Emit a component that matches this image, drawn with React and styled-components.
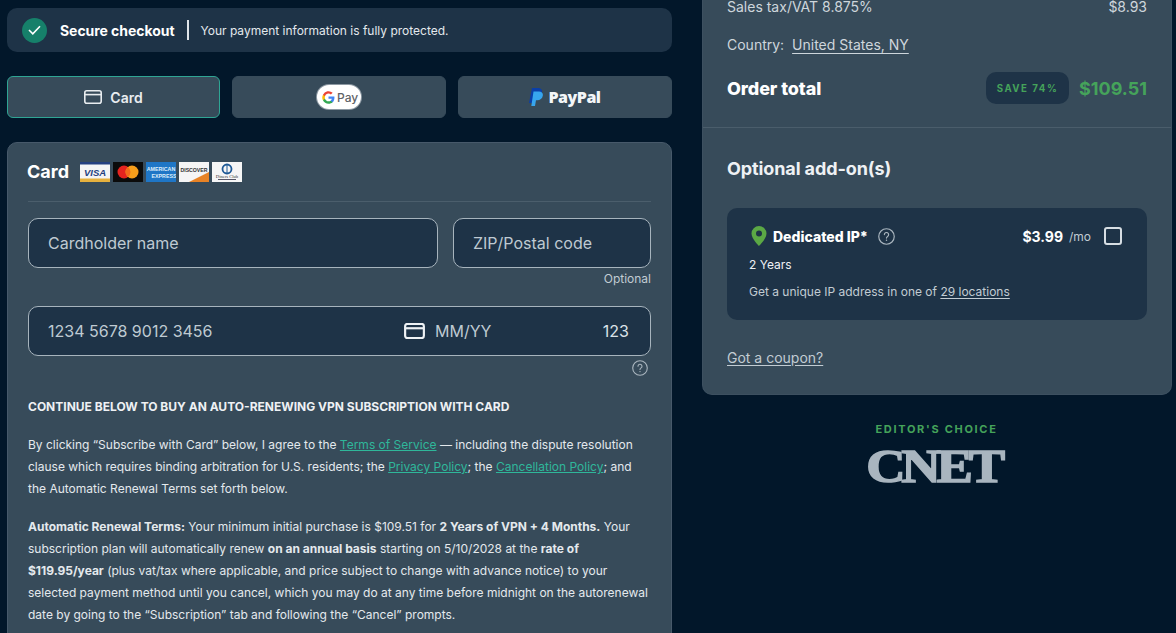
import React from "react";
import styled, { createGlobalStyle } from "styled-components";

const Global = createGlobalStyle`
  html, body { margin: 0; padding: 0; height: 633px; overflow: hidden; background: #02172a; }
  * { box-sizing: border-box; }
  body { font-family: Inter, "Liberation Sans", sans-serif; color: #fff; }
`;

const Page = styled.div`
  display: grid;
  grid-template-columns: 665px 470px;
  column-gap: 30px;
  padding-left: 7px;
  height: 633px;
  overflow: hidden;
  background: #02172a;
`;
const Left = styled.main`
  display: flex;
  flex-direction: column;
  padding-top: 8px;
`;
const Banner = styled.div`
  height: 44px;
  flex: none;
  border-radius: 10px;
  background: #1e3347;
  display: flex;
  align-items: center;
  padding-left: 15px;
`;
const Check = styled.span`
  width: 25px;
  height: 25px;
  border-radius: 50%;
  background: #16806a;
  display: flex;
  align-items: center;
  justify-content: center;
  margin-right: 13px;
`;
const BannerTitle = styled.strong`
  font-size: 14px;
  font-weight: 700;
  letter-spacing: -0.05px;
`;
const Bar = styled.span`
  width: 2px;
  height: 20px;
  background: #dfe5ea;
  margin: 0 12px;
`;
const BannerText = styled.span`
  font-size: 12px;
  color: #e4e9ed;
`;
const Tabs = styled.div`
  display: grid;
  grid-template-columns: 213px 214px 214px;
  column-gap: 12px;
  margin-top: 24px;
  flex: none;
`;
const Tab = styled.div`
  height: 42px;
  border-radius: 6px;
  background: #374b5a;
  border: 1px solid ${(p) => (p.$active ? "#2fa594" : "#374b5a")};
  display: flex;
  align-items: center;
  justify-content: center;
  gap: 8px;
  font-size: 14px;
  font-weight: 600;
  color: #e9edf0;
`;
const GPay = styled.span`
  display: flex;
  align-items: center;
  gap: 2px;
  width: 44px;
  height: 24px;
  border-radius: 12px;
  background: #fff;
  box-shadow: 0 0 0 1px #8d99a3;
  color: #5f6368;
  font-size: 12px;
  font-weight: 500;
  padding-left: 5px;
`;
const PayPalWord = styled.span`
  font-family: "Open Sans", sans-serif;
  font-size: 16px;
  font-weight: 800;
  color: #f3f6f8;
  letter-spacing: -0.5px;
`;
const PayPalLogo = styled.span`
  display: flex;
  align-items: center;
  gap: 5px;
`;
const Card = styled.section`
  margin-top: 24px;
  flex: none;
  background: #374b5a;
  border: 1px solid #47596a;
  border-radius: 10px;
  padding: 15px 20px 40px;
`;
const CardHead = styled.div`
  display: flex;
  align-items: center;
  height: 28px;
  padding-bottom: 1px;
  margin-bottom: 15px;
`;
const CardTitle = styled.h2`
  margin: 0 10px 0 -1px;
  font-size: 18px;
  font-weight: 700;
`;
const Logos = styled.div`
  display: flex;
  gap: 3px;
  margin-left: 1px;
`;
const Divider = styled.div`
  height: 1px;
  background: #4b5e6c;
  margin-bottom: 16px;
`;
const FieldRow = styled.div`
  display: grid;
  grid-template-columns: 410px 198px;
  column-gap: 15px;
`;
const Field = styled.div`
  height: 50px;
  border-radius: 10px;
  border: 1px solid #a7b4bd;
  background: #1e3347;
  display: flex;
  align-items: center;
  padding: 0 20px 0 19px;
  font-size: 16px;
  color: #bfcad2;
`;
const Hint = styled.div`
  text-align: right;
  font-size: 12px;
  line-height: 22px;
  color: #c2ccd3;
`;
const CardField = styled(Field)`
  margin-top: 16px;
  width: 623px;
  padding-right: 21px;
`;
const CardNum = styled.span`
  width: 356px;
  flex: none;
`;
const Expiry = styled.span`
  display: flex;
  align-items: center;
  gap: 10px;
  svg { color: #eef2f5; }
`;
const Cvc = styled.span`
  margin-left: auto;
  color: #dbe2e7;
`;
const HelpRow = styled.div`
  display: flex;
  justify-content: flex-end;
  width: 623px;
  padding: 4px 3px 0 0;
  height: 21px;
`;
const Legal = styled.div`
  margin-top: 19px;
  font-size: 12px;
  line-height: 22px;
  color: #e4e9ed;
  width: 623px;
`;
const LegalHead = styled.h3`
  margin: 0 0 16px;
  font-size: 12px;
  line-height: 22px;
  font-weight: 700;
  color: #eef1f4;
`;
const Para = styled.p`
  margin: 0 0 16px;
  b { font-weight: 700; }
`;
const Green = styled.a`
  color: #2fb79a;
  text-decoration: underline;
`;
const Right = styled.aside`
  background: #374b5a;
  border-radius: 0 0 10px 10px;
  height: 395px;
  border: 1px solid #3d5060;
  border-top: 0;
  overflow: hidden;
`;
const Summary = styled.div`
  height: 130px;
  padding: 0 24px;
  border-bottom: 1px solid #4a5d6b;
`;
const SummaryRow = styled.div`
  display: flex;
  justify-content: space-between;
  font-size: 14px;
  line-height: 17px;
  margin-top: -2px;
  color: #ced6dc;
`;
const CountryRow = styled.div`
  font-size: 14px;
  line-height: 17px;
  margin-top: 21px;
  color: #ced6dc;
  span {
    margin-left: 4px;
    text-decoration: underline;
    text-underline-offset: 3px;
  }
`;
const TotalRow = styled.div`
  display: flex;
  align-items: center;
  margin-top: 19px;
`;
const TotalLabel = styled.strong`
  flex: 1;
  font-size: 18px;
  font-weight: 800;
  letter-spacing: -0.1px;
`;
const Save = styled.span`
  width: 83px;
  height: 32px;
  border-radius: 10px;
  background: #1e3347;
  display: flex;
  align-items: center;
  justify-content: center;
  color: #45a35a;
  font-size: 9.7px;
  font-weight: 700;
  letter-spacing: 1.5px;
  margin-right: 10px;
`;
const TotalPrice = styled.strong`
  font-size: 18px;
  font-weight: 700;
  color: #45a35a;
`;
const Addons = styled.div`
  padding: 30px 24px 0;
`;
const AddonsTitle = styled.h2`
  margin: 0;
  font-size: 18px;
  line-height: 22px;
  font-weight: 700;
  letter-spacing: -0.1px;
  color: #eef1f4;
`;
const Addon = styled.div`
  margin-top: 28px;
  height: 112px;
  width: 420px;
  border-radius: 10px;
  background: #1e3347;
  padding: 17px 25px 0 22px;
`;
const AddonTop = styled.div`
  display: flex;
  align-items: center;
  height: 22px;
  padding-left: 2px;
`;
const AddonName = styled.strong`
  font-size: 14px;
  font-weight: 800;
  margin: 0 10px 0 6px;
`;
const AddonPrice = styled.strong`
  margin-left: auto;
  font-size: 14px;
  font-weight: 700;
`;
const Per = styled.span`
  font-size: 12px;
  color: #c2ccd3;
  margin: 0 13px 0 6px;
`;
const Box = styled.span`
  width: 18px;
  height: 18px;
  border: 2px solid #d7dee3;
  border-radius: 3px;
`;
const Years = styled.div`
  font-size: 12px;
  line-height: 16px;
  margin-top: 10px;
  color: #eef1f4;
`;
const AddonDesc = styled.div`
  font-size: 12px;
  line-height: 16px;
  margin-top: 11px;
  color: #c2ccd3;
  span {
    text-decoration: underline;
    text-underline-offset: 2px;
  }
`;
const Coupon = styled.a`
  display: block;
  margin-top: 29px;
  font-size: 14px;
  line-height: 18px;
  color: #c2ccd3;
  text-decoration: underline;
  text-underline-offset: 2px;
`;
const Editor = styled.div`
  margin-top: 27px;
  text-align: center;
  padding-right: 1px;
  font-size: 11px;
  font-weight: 700;
  letter-spacing: 1.7px;
  color: #45a35a;
  line-height: 15px;
`;
const Cnet = styled.div`
  margin: 7px 0 0;
  padding-right: 6px;
  text-align: center;
  font-family: "Liberation Serif", serif;
  font-weight: 700;
  font-size: 47px;
  line-height: 44px;
  letter-spacing: -3.6px;
  color: #a9b5bf;
  -webkit-text-stroke: 1.5px #a9b5bf;
  transform: scaleX(1.16);
`;
const RightCol = styled.div`
  display: flex;
  flex-direction: column;
`;

const CardIcon = ({ size = 18, sw = 1.6 }) => (
  <svg width={size} height={Math.round(size * 0.78)} viewBox="0 0 18 14" fill="none" stroke="currentColor" strokeWidth={sw}>
    <rect x="0.8" y="0.8" width="16.4" height="12.4" rx="2" />
    <path d="M0.8 4.6H17.2" />
  </svg>
);
const Help = ({ size = 16, color = "#aab6bf" }) => (
  <svg width={size} height={size} viewBox="0 0 16 16" fill="none">
    <circle cx="8" cy="8" r="7.3" stroke={color} strokeWidth="1.1" />
    <path d="M6 6.2a2 2 0 1 1 3.1 1.7c-.7.45-1.1.8-1.1 1.6" stroke={color} strokeWidth="1.1" fill="none" strokeLinecap="round" />
    <circle cx="8" cy="11.6" r=".7" fill={color} />
  </svg>
);
const Visa = () => (
  <svg width="30" height="20" viewBox="0 0 30 20">
    <rect width="30" height="20" fill="#f4f4f4" />
    <rect width="30" height="2.5" fill="#24407f" />
    <rect y="16.5" width="30" height="3.5" fill="#e6b13e" />
    <text x="15" y="13.5" textAnchor="middle" fontFamily="Liberation Sans" fontWeight="700" fontStyle="italic" fontSize="9.5" fill="#24407f">VISA</text>
  </svg>
);
const Master = () => (
  <svg width="30" height="20" viewBox="0 0 30 20">
    <rect width="30" height="20" fill="#0b0b0b" />
    <circle cx="11" cy="10" r="6.5" fill="#e5231f" />
    <circle cx="19" cy="10" r="6.5" fill="#f79e1b" />
    <path d="M15 4.900a6.500 6.500 0 0 1 0 10.200a6.500 6.500 0 0 1 0-10.200z" fill="#f26a1b" />
  </svg>
);
const Amex = () => (
  <svg width="30" height="20" viewBox="0 0 30 20">
    <rect width="30" height="20" fill="#1f76c6" />
    <text x="15" y="8.500" textAnchor="middle" fontFamily="Liberation Sans" fontWeight="700" fontSize="5.300" fill="#dfeefa">AMERICAN</text>
    <text x="18" y="15.500" textAnchor="middle" fontFamily="Liberation Sans" fontWeight="700" fontSize="5.300" fill="#dfeefa">EXPRESS</text>
  </svg>
);
const Discover = () => (
  <svg width="30" height="20" viewBox="0 0 30 20">
    <rect width="30" height="20" fill="#f5f5f5" />
    <path d="M10 20 L30 10 V20Z" fill="#e88326" />
    <text x="15" y="10" textAnchor="middle" fontFamily="Liberation Sans" fontWeight="700" fontSize="5.200" fill="#333">DISCOVER</text>
  </svg>
);
const Diners = () => (
  <svg width="30" height="20" viewBox="0 0 30 20">
    <rect width="30" height="20" fill="#f6f6f6" />
    <circle cx="15" cy="7" r="4.500" fill="none" stroke="#1f5a96" strokeWidth="1.800" />
    <path d="M15 3v8" stroke="#1f5a96" strokeWidth="1" />
    <text x="15" y="15.500" textAnchor="middle" fontFamily="Liberation Serif" fontSize="4.600" fill="#333">Diners Club</text>
    <rect x="6" y="17" width="18" height="1" fill="#556" />
  </svg>
);
const GLogo = () => (
  <svg width="13" height="13" viewBox="0 0 24 24">
    <path fill="#4285F4" d="M23 12.300c0-.8-.1-1.600-.2-2.300H12v4.400h6.200a5.300 5.300 0 0 1-2.300 3.500v2.900h3.700c2.200-2 3.400-5 3.400-8.500z" />
    <path fill="#34A853" d="M12 23.500c3.100 0 5.700-1 7.600-2.800l-3.700-2.900c-1 .7-2.300 1.100-3.900 1.100-3 0-5.500-2-6.400-4.800H1.800v3A11.500 11.500 0 0 0 12 23.500z" />
    <path fill="#FBBC05" d="M5.600 14.100a6.900 6.900 0 0 1 0-4.400v-3H1.800a11.500 11.500 0 0 0 0 10.400z" />
    <path fill="#EA4335" d="M12 4.800c1.700 0 3.200.6 4.400 1.700l3.300-3.300A11.500 11.500 0 0 0 1.800 6.700l3.800 3c.9-2.800 3.400-4.900 6.400-4.900z" />
  </svg>
);
const PayPalMark = () => (
  <svg width="14" height="18" viewBox="0 0 14 18">
    <path d="M3 0h5.500C12 0 13.500 2 13 4.800 12.400 8 10 9.500 7 9.500H5L4 15H0z" fill="#0a3fa8" />
    <path d="M4.500 3.500H10c2.800 0 4.300 1.700 3.800 4.300-.5 3-2.800 4.400-5.500 4.400H7L6 18H2.300z" fill="#37a5ee" />
  </svg>
);
const Pin = () => (
  <svg width="16" height="20" viewBox="0 0 16 20">
    <path d="M8 0a7.500 7.500 0 0 1 7.500 7.500C15.500 13 8 20 8 20S.5 13 .5 7.500A7.500 7.500 0 0 1 8 0z" fill="#5ba845" />
    <circle cx="8" cy="7.500" r="3" fill="#1e3347" />
  </svg>
);

export default function App() {
  return (
    <>
      <Global />
      <Page>
        <Left>
          <Banner>
            <Check>
              <svg width="13" height="10" viewBox="0 0 13 10" fill="none" stroke="#fff" strokeWidth="1.6">
                <path d="M1 5l3.800 3.800L12 1.200" />
              </svg>
            </Check>
            <BannerTitle>Secure checkout</BannerTitle>
            <Bar />
            <BannerText>Your payment information is fully protected.</BannerText>
          </Banner>
          <Tabs>
            <Tab $active>
              <CardIcon />
              Card
            </Tab>
            <Tab>
              <GPay>
                <GLogo />
                Pay
              </GPay>
            </Tab>
            <Tab>
              <PayPalLogo>
                <PayPalMark />
                <PayPalWord>PayPal</PayPalWord>
              </PayPalLogo>
            </Tab>
          </Tabs>
          <Card>
            <CardHead>
              <CardTitle>Card</CardTitle>
              <Logos>
                <Visa />
                <Master />
                <Amex />
                <Discover />
                <Diners />
              </Logos>
            </CardHead>
            <Divider />
            <FieldRow>
              <Field>Cardholder name</Field>
              <div>
                <Field>ZIP/Postal code</Field>
                <Hint>Optional</Hint>
              </div>
            </FieldRow>
            <CardField>
              <CardNum>1234 5678 9012 3456</CardNum>
              <Expiry>
                <CardIcon size={21} sw={1.9} />
                MM/YY
              </Expiry>
              <Cvc>123</Cvc>
            </CardField>
            <HelpRow>
              <Help />
            </HelpRow>
            <Legal>
              <LegalHead>CONTINUE BELOW TO BUY AN AUTO-RENEWING VPN SUBSCRIPTION WITH CARD</LegalHead>
              <Para>
                By clicking “Subscribe with Card” below, I agree to the <Green>Terms of Service</Green> — including the dispute resolution clause which requires binding arbitration for U.S. residents; the <Green>Privacy Policy</Green>; the <Green>Cancellation Policy</Green>; and the Automatic Renewal Terms set forth below.
              </Para>
              <Para>
                <b>Automatic Renewal Terms:</b> Your minimum initial purchase is $109.51 for <b>2 Years of VPN + 4 Months.</b> Your subscription plan will automatically renew <b>on an annual basis</b> starting on 5/10/2028 at the <b>rate of $119.95/year</b> (plus vat/tax where applicable, and price subject to change with advance notice) to your selected payment method until you cancel, which you may do at any time before midnight on the autorenewal date by going to the “Subscription” tab and following the “Cancel” prompts.
              </Para>
            </Legal>
          </Card>
        </Left>
        <RightCol>
          <Right>
            <Summary>
              <SummaryRow>
                <span>Sales tax/VAT 8.875%</span>
                <span>$8.93</span>
              </SummaryRow>
              <CountryRow>
                Country: <span>United States, NY</span>
              </CountryRow>
              <TotalRow>
                <TotalLabel>Order total</TotalLabel>
                <Save>SAVE 74%</Save>
                <TotalPrice>$109.51</TotalPrice>
              </TotalRow>
            </Summary>
            <Addons>
              <AddonsTitle>Optional add-on(s)</AddonsTitle>
              <Addon>
                <AddonTop>
                  <Pin />
                  <AddonName>Dedicated IP*</AddonName>
                  <Help size={17} />
                  <AddonPrice>$3.99</AddonPrice>
                  <Per>/mo</Per>
                  <Box />
                </AddonTop>
                <Years>2 Years</Years>
                <AddonDesc>
                  Get a unique IP address in one of <span>29 locations</span>
                </AddonDesc>
              </Addon>
              <Coupon>Got a coupon?</Coupon>
            </Addons>
          </Right>
          <Editor>EDITOR'S CHOICE</Editor>
          <Cnet>CNET</Cnet>
        </RightCol>
      </Page>
    </>
  );
}
